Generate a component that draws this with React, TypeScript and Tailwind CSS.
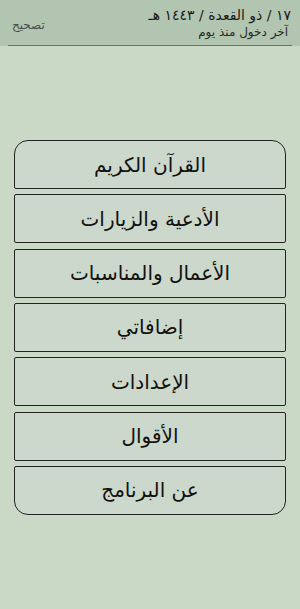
import React from "react";

const items = [
  "القرآن الكريم",
  "الأدعية والزيارات",
  "الأعمال والمناسبات",
  "إضافاتي",
  "الإعدادات",
  "الأقوال",
  "عن البرنامج",
];

export default function App() {
  return (
    <div
      className="w-[300px] h-[609px] bg-[#c9d9c6] flex flex-col"
      style={{ fontFamily: '"DejaVu Sans", "Noto Sans", sans-serif' }}
    >
      <div className="h-[46px] bg-[#b2c5b0] flex flex-col">
        <div className="flex-1 flex items-center justify-between pl-[12px] pr-[9px]">
          <div className="text-[12px] text-[#4a4a4a] mt-[4px]" dir="rtl">
            تصحيح
          </div>
          <div className="flex flex-col items-start" dir="rtl">
            <div className="text-[14px] leading-[18px] text-[#1a1a1a] mt-[2px]">
              ١٧ / ذو القعدة / ١٤٤٣ هـ
            </div>
            <div className="text-[12px] leading-[17px] text-[#2a2a2a] mr-[3px]">
              آخر دخول منذ يوم
            </div>
          </div>
        </div>
        <div className="mx-[8px] w-[284px] h-[1px] bg-[#6d736b]" />
      </div>
      <div className="mt-[94px] mx-[14px] flex flex-col gap-[5.33px]">
        {items.map((t, i) => {
          const rounded =
            i === 0
              ? "rounded-t-[14px] rounded-b-[2px]"
              : i === items.length - 1
              ? "rounded-b-[14px] rounded-t-[2px]"
              : "rounded-[2px]";
          return (
            <div
              key={i}
              dir="rtl"
              className={`h-[49px] w-[272px] border-[1.5px] border-[#222] bg-[#ccd8cb] flex items-center justify-center text-[20px] text-[#111] ${rounded}`}
            >
              {t}
            </div>
          );
        })}
      </div>
    </div>
  );
}
